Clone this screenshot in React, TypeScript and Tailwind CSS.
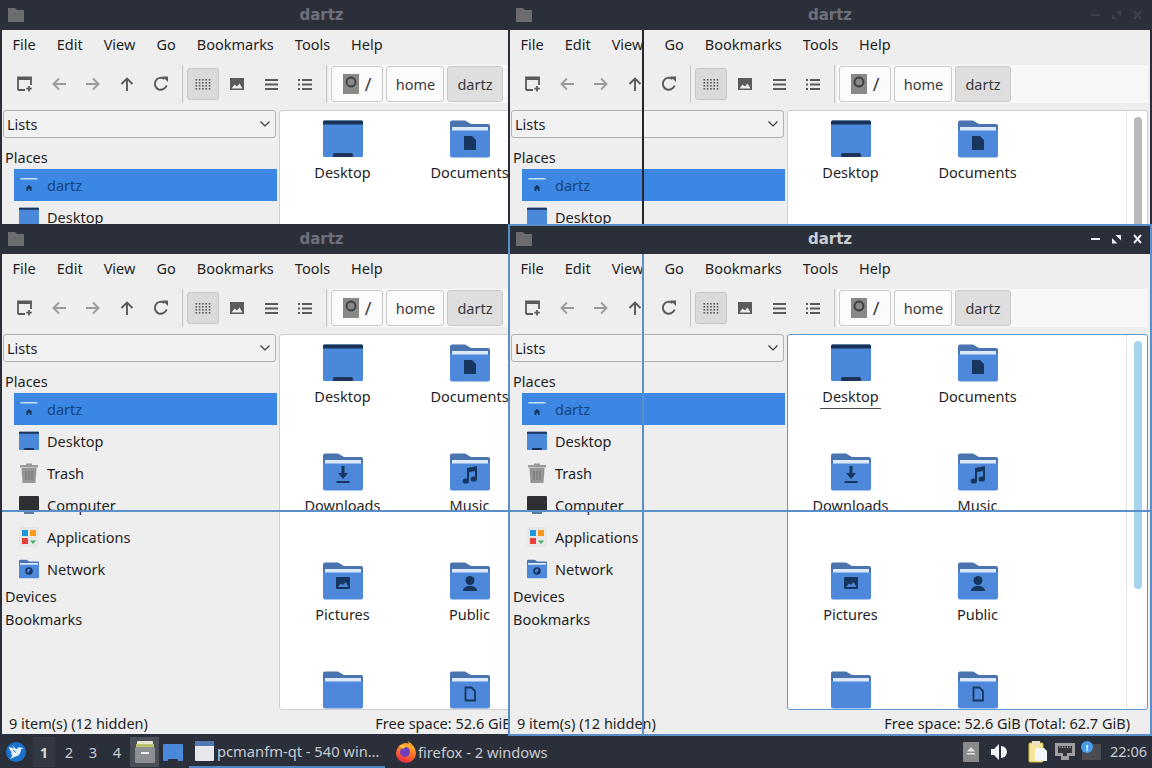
import React from "react";

const DARK = "#17365f";

function Glyph({ name }: { name: string }) {
  switch (name) {
    case "doc":
      return <path d="M14 17h8l4 4v10H14z" fill={DARK} />;
    case "download":
      return (
        <g fill={DARK}>
          <path d="M18.500 14h3v7h3.500L20 27l-5-6h3.500z" />
          <rect x="13.500" y="29" width="13" height="2" />
        </g>
      );
    case "music":
      return (
        <g fill={DARK}>
          <path d="M17 16l10-2v13h-2V19l-6 1.300V29h-2z" />
          <ellipse cx="15.800" cy="29" rx="3.200" ry="2.600" />
          <ellipse cx="23.800" cy="27" rx="3.200" ry="2.600" />
        </g>
      );
    case "pictures":
      return (
        <g>
          <rect x="13" y="16" width="14" height="12" rx="1" fill={DARK} />
          <path d="M15 26l3-3.500 2 1.500 2.500-3 3 5z" fill="#4c86d9" />
        </g>
      );
    case "public":
      return (
        <g fill={DARK}>
          <circle cx="20" cy="19.500" r="4.500" />
          <path d="M13 30c0-3.500 3-5 7-5s7 1.500 7 5z" />
        </g>
      );
    case "templates":
      return (
        <path d="M15.500 17.500h6l3.500 3.500v9.500h-9.500z" fill="none" stroke={DARK} strokeWidth="1.800" />
      );
    case "globe":
      return (
        <g>
          <circle cx="20" cy="24" r="7.500" fill={DARK} />
          <path d="M18 19.500l5 1-1 4-3 1 1 3-3-1-1-4z" fill="#4c86d9" />
        </g>
      );
    case "home":
      return <path d="M20 20l7 6h-2v6h-3.500v-4h-3v4H15v-6h-2z" fill={DARK} />;
    default:
      return null;
  }
}

function Folder({ glyph, size = 40 }: { glyph?: string; size?: number }) {
  return (
    <svg width={size} height={size} viewBox="0 0 40 40">
      <path d="M0 3.500a2 2 0 0 1 2-2h13l6 3.500h17a2 2 0 0 1 2 2V14H0z" fill="#4a74b0" />
      <path d="M0 11h40v25.500a2 2 0 0 1-2 2H2a2 2 0 0 1-2-2z" fill="#4d88da" />
      <rect x="2" y="8" width="36" height="3.500" fill="#dbe9fa" />
      {glyph && <Glyph name={glyph} />}
    </svg>
  );
}

function HomeIcon() {
  return (
    <svg width="20" height="20" viewBox="0 0 40 40">
      <rect x="3" y="6" width="34" height="3" fill="#cfe2f8" />
      <Glyph name="home" />
    </svg>
  );
}

function DesktopIcon({ size = 40 }: { size?: number }) {
  return (
    <svg width={size} height={size} viewBox="0 0 40 40">
      <rect x="0" y="1.500" width="40" height="36.500" rx="1.500" fill="#4a88da" />
      <path d="M0 3a1.500 1.500 0 0 1 1.500-1.500h37A1.500 1.500 0 0 1 40 3v2.500H0z" fill="#1b3358" />
      <path d="M10 38v-2a2 2 0 0 1 2-2h16a2 2 0 0 1 2 2v2z" fill="#1b3358" />
    </svg>
  );
}

function TrashIcon() {
  return (
    <svg width="20" height="20" viewBox="0 0 20 20">
      <rect x="1" y="2" width="18" height="2.500" fill="#999999" />
      <rect x="7" y="0.500" width="6" height="2" fill="#999999" />
      <path d="M2.500 5h15l-1 15h-13z" fill="#969696" />
      <path d="M7 8v9M10 8v9M13 8v9" stroke="#7c7c7c" strokeWidth="1.500" />
    </svg>
  );
}

function ComputerIcon() {
  return (
    <svg width="20" height="20" viewBox="0 0 20 20">
      <rect x="0" y="1" width="20" height="15" rx="1" fill="#2f3033" />
      <rect x="5" y="16" width="10" height="3" fill="#5d7ea3" />
    </svg>
  );
}

function AppsIcon() {
  return (
    <svg width="20" height="20" viewBox="0 0 20 20">
      <rect x="0" y="0" width="20" height="20" rx="2" fill="#e6e6e6" />
      <rect x="3" y="3" width="6" height="6" fill="#2196d8" />
      <rect x="11" y="3" width="6" height="6" fill="#f79a1e" />
      <rect x="3" y="11" width="6" height="6" fill="#ea3f38" />
      <path d="M14 10.500v3h3L14 17l-3-3.500h3z" fill="#3fae6a" />
    </svg>
  );
}

function ToolIcon({ name }: { name: string }) {
  const back = "#9b9b9b";
  const dark = "#5a5a5a";
  switch (name) {
    case "new":
      return (
        <svg width="16" height="16" viewBox="0 0 16 16">
          <path d="M1 14V1.500h13V9M1 14h7" fill="none" stroke={dark} strokeWidth="1.800" />
          <rect x="1" y="1" width="13.500" height="3" fill={dark} />
          <path d="M12 10v5.500M9.300 12.700h5.500" stroke={dark} strokeWidth="1.700" />
        </svg>
      );
    case "back":
      return (
        <svg width="14" height="14" viewBox="0 0 14 14">
          <path d="M7 1.500L1.500 7 7 12.500M2 7h12" fill="none" stroke={back} strokeWidth="1.900" />
        </svg>
      );
    case "forward":
      return (
        <svg width="14" height="14" viewBox="0 0 14 14">
          <path d="M7 1.500L12.500 7 7 12.500M12 7H0" fill="none" stroke={back} strokeWidth="1.900" />
        </svg>
      );
    case "up":
      return (
        <svg width="14" height="14" viewBox="0 0 14 14">
          <path d="M1.500 7L7 1.500 12.500 7M7 2v12" fill="none" stroke={dark} strokeWidth="1.900" />
        </svg>
      );
    case "reload":
      return (
        <svg width="16" height="16" viewBox="0 0 16 16">
          <path d="M13.600 9.500A6 6 0 1 1 11.500 3" fill="none" stroke={dark} strokeWidth="1.900" />
          <path d="M9.500 0.500h5.500V6z" fill={dark} />
        </svg>
      );
    case "grid":
      return (
        <svg width="16" height="12" viewBox="0 0 16 12" fill={dark}>
          {[0, 1, 2, 3].map((r) =>
            [0, 1, 2, 3, 4].map((c) => (
              <rect key={`${r}-${c}`} x={c * 3.300 + 0.500} y={r * 3 + 1} width="1.600" height="1.600" />
            ))
          )}
        </svg>
      );
    case "image":
      return (
        <svg width="14" height="12" viewBox="0 0 14 12">
          <rect width="14" height="12" fill={dark} />
          <path d="M1.500 10.500l3-4 2.500 2 2.500-3 3 5z" fill="#eeeeee" />
        </svg>
      );
    case "lines":
      return (
        <svg width="13" height="11" viewBox="0 0 13 11" fill={dark}>
          <rect y="0" width="13" height="2" />
          <rect y="4.500" width="13" height="2" />
          <rect y="9" width="13" height="2" />
        </svg>
      );
    default:
      return (
        <svg width="14" height="11" viewBox="0 0 14 11" fill={dark}>
          <rect y="0" width="2" height="2" />
          <rect y="4.500" width="2" height="2" />
          <rect y="9" width="2" height="2" />
          <rect x="4" y="0" width="10" height="2" />
          <rect x="4" y="4.500" width="10" height="2" />
          <rect x="4" y="9" width="10" height="2" />
        </svg>
      );
  }
}

function WindowControls({ active }: { active: boolean }) {
  const c = active ? "#eceff3" : "#3d414b";
  return (
    <div className="absolute right-[8px] top-[7px] flex items-center gap-[12px]">
      <svg width="9" height="12" viewBox="0 0 9 12">
        <rect y="5" width="9" height="2" fill={c} />
      </svg>
      <svg width="9" height="12" viewBox="0 0 9 12" fill={c}>
        <path d="M3.500 2H9v5.500zM0 5l5.500 5.500H0z" />
      </svg>
      <svg width="9" height="12" viewBox="0 0 9 12">
        <path d="M1 2l7 8M8 2l-7 8" stroke={c} strokeWidth="2" />
      </svg>
    </div>
  );
}

const MENUS = ["File", "Edit", "View", "Go", "Bookmarks", "Tools", "Help"];
const FILES: { label: string; glyph?: string; desktop?: boolean }[] = [
  { label: "Desktop", desktop: true },
  { label: "Documents", glyph: "doc" },
  { label: "Downloads", glyph: "download" },
  { label: "Music", glyph: "music" },
  { label: "Pictures", glyph: "pictures" },
  { label: "Public", glyph: "public" },
  { label: "" },
  { label: "", glyph: "templates" },
];

function Place({ icon, label, selected }: { icon: React.ReactNode; label: string; selected?: boolean }) {
  return (
    <div
      className={`ml-[12px] flex h-[32px] items-center gap-[8px] pl-[5px] ${
        selected ? "bg-[#3b87e3] text-[#17457f]" : ""
      }`}
    >
      <span className="flex h-[20px] w-[20px] items-center justify-center">{icon}</span>
      <span className="mt-[2px]">{label}</span>
    </div>
  );
}

function Crumb({ children, on, w }: { children: React.ReactNode; on?: boolean; w: string }) {
  return (
    <div
      className={`flex h-[36px] items-center justify-center rounded-[3px] border border-[#c9c9c9] text-[#3a3a3a] ${w} ${
        on ? "bg-[#dedede]" : "bg-[#fbfbfb]"
      }`}
    >
      {children}
    </div>
  );
}

function Win({ active = false, wide = false }: { active?: boolean; wide?: boolean }) {
  return (
    <div
      className={`relative flex h-[512px] shrink-0 flex-col border-2 bg-[#eeeeee] text-[14.5px] text-[#1f1f1f] ${
        wide ? "w-[644px]" : "w-[643px]"
      } ${active ? "border-[#5b8fc9]" : "border-[#2b2f39]"}`}
    >
      <div className="relative flex h-[28px] shrink-0 items-center justify-center bg-[#2b2f39] pb-[1px]">
        <svg className="absolute left-[6px] top-[6px]" width="16" height="14" viewBox="0 0 16 14">
          <path d="M0 0h7l2 2h7v12H0z" fill="#6c6c6c" />
        </svg>
        <span
          className={`font-['DejaVu_Sans',sans-serif] text-[15px] font-bold ${
            active ? "text-[#c9ccd2]" : "text-[#6d7078]"
          }`}
        >
          dartz
        </span>
        <WindowControls active={active} />
      </div>

      <div className="flex h-[28px] shrink-0 items-center gap-[21px] pl-[10.500px] pt-[2px]">
        {MENUS.map((m) => (
          <span key={m}>{m}</span>
        ))}
      </div>

      <div className="mt-[5px] flex h-[42px] shrink-0 items-center">
        <div className="flex items-center pl-[6px]">
          {["new", "back", "forward", "up", "reload"].map((n) => (
            <div key={n} className="flex h-[32px] w-[34px] items-center justify-center">
              <ToolIcon name={n} />
            </div>
          ))}
        </div>
        <div className="ml-[4px] h-[38px] w-px bg-[#c4c4c4]" />
        <div className="ml-[3px] flex items-center">
          {["grid", "image", "lines", "details"].map((n, i) => (
            <div key={n} className="flex w-[34px] justify-center">
              <div
                className={`flex h-[32px] w-[32px] items-center justify-center rounded-[3px] ${
                  i === 0 ? "border border-[#c8c8c8] bg-[#d9dadb]" : ""
                }`}
              >
                <ToolIcon name={n} />
              </div>
            </div>
          ))}
        </div>
        <div className="ml-[4px] h-[38px] w-px bg-[#c4c4c4]" />
        <div className="mr-[2px] ml-[2px] flex h-[38px] flex-1 items-center gap-[3px] bg-[#f8f8f8] pl-[2px]">
          <Crumb w="w-[52px]">
            <span className="flex items-center gap-[6px]">
              <svg width="16" height="20" viewBox="0 0 16 20">
                <rect width="16" height="20" fill="#888888" />
                <circle cx="8" cy="8" r="4.500" fill="none" stroke="#3c3c3c" strokeWidth="1.800" />
              </svg>
              <span className="text-[18px]">/</span>
            </span>
          </Crumb>
          <Crumb w="w-[58px] pt-[2px] pl-[1px]">home</Crumb>
          <Crumb w="w-[56px] pt-[2px]" on>
            dartz
          </Crumb>
        </div>
      </div>

      <div className="mt-[5px] flex min-h-0 flex-1">
        <div className="flex w-[275px] shrink-0 flex-col">
          <div className="ml-[1px] flex h-[28px] w-[273px] shrink-0 items-center justify-between rounded-[3px] border border-[#b4b4b4] bg-[#f1f1f1] pl-[3px] pr-[4px]">
            <span className="mt-[2px]">Lists</span>
            <svg width="12" height="8" viewBox="0 0 12 8">
              <path d="M1.500 1.500L6 6l4.500-4.500" fill="none" stroke="#3a3a3a" strokeWidth="1.200" />
            </svg>
          </div>
          <div className="mt-[8px] flex h-[23px] items-center pl-[3px]">Places</div>
          <Place selected icon={<HomeIcon />} label="dartz" />
          <Place icon={<DesktopIcon size={20} />} label="Desktop" />
          <Place icon={<TrashIcon />} label="Trash" />
          <Place icon={<ComputerIcon />} label="Computer" />
          <Place icon={<AppsIcon />} label="Applications" />
          <Place icon={<Folder size={20} glyph="globe" />} label="Network" />
          <div className="flex h-[23px] items-center pl-[3px]">Devices</div>
          <div className="flex h-[23px] items-center pl-[3px]">Bookmarks</div>
        </div>

        <div
          className={`ml-[2px] mr-[2px] flex min-w-0 flex-1 justify-between overflow-hidden rounded-[3px] border bg-white ${
            active ? "border-[#5b9ad5]" : "border-[#cfcfcf]"
          }`}
        >
          <div className="-ml-[1px] grid h-fit w-[254px] shrink-0 grid-cols-[127px_127px] content-start pt-[8px]">
            {FILES.map((f, i) => (
              <div key={i} className="flex h-[109px] flex-col items-center">
                {f.desktop ? <DesktopIcon /> : <Folder glyph={f.glyph} />}
                <span
                  className={`mt-[3px] px-[2px] pb-[2px] leading-[20px] ${
                    active && i === 0 ? "border-b border-[#4a4a4a]" : ""
                  }`}
                >
                  {f.label}
                </span>
              </div>
            ))}
          </div>
          <div className="flex w-[21px] shrink-0 justify-end border-l border-[#e6e6e6] pr-[5px] pt-[6px]">
            <div
              className={`h-[248px] w-[8px] rounded-[4px] ${active ? "bg-[#a7d4ee]" : "bg-[#b9b9b9]"}`}
            />
          </div>
        </div>
      </div>

      <div className="flex h-[24px] shrink-0 items-center justify-between pl-[7px] pr-[20px] pt-[4px]">
        <span>9 item(s) (12 hidden)</span>
        <span>Free space: 52.6 GiB (Total: 62.7 GiB)</span>
      </div>
    </div>
  );
}

function Logo() {
  return (
    <svg width="22" height="20" viewBox="0 0 22 20">
      <circle cx="11" cy="10" r="10" fill="#1b72cc" />
      <path
        d="M4 5l5 1.500L7 3l4.500 4.500c.8-1.800 2.400-2.600 4-2l3 1-2.500.8c0 3.700-2 6.700-5.500 7.200L5 17l2.500-3.500C6 12.500 6 11 6.500 10 5 8.500 4.300 7 4 5z"
        fill="#e6f2fc"
      />
      <path d="M8 8l3 2.500" stroke="#1b72cc" strokeWidth="1" />
    </svg>
  );
}

function Firefox() {
  return (
    <svg width="22" height="22" viewBox="0 0 22 22">
      <defs>
        <linearGradient id="ff" x1="0.700" y1="0" x2="0.300" y2="1">
          <stop offset="0" stopColor="#ffb52e" />
          <stop offset="0.550" stopColor="#ff6a2c" />
          <stop offset="1" stopColor="#e6224f" />
        </linearGradient>
      </defs>
      <circle cx="11" cy="12" r="10" fill="url(#ff)" />
      <path d="M13 0c4 3 7 6 7 10l-5-3z" fill="#ffa52b" />
      <circle cx="10" cy="11" r="5" fill="#6e3fbf" />
      <path d="M4 5c2-1 5-1 7 0l-3 3z" fill="#ffcf4a" />
    </svg>
  );
}

function Tray() {
  return (
    <div className="flex items-center">
      <div className="flex h-[20px] w-[16px] items-start justify-center bg-[#8a8a8a] pt-[5px]">
        <svg width="8" height="8" viewBox="0 0 8 8" fill="#e4e4e4">
          <path d="M4 0l4 4.500H0z" />
          <rect y="6" width="8" height="1.500" />
        </svg>
      </div>
      <svg className="ml-[12px]" width="17" height="16" viewBox="0 0 17 16">
        <path d="M0 5h3l5-5v16l-5-5H0z" fill="#f2f2f2" />
        <path d="M10 2a6 6 0 0 1 0 12z" fill="#f2f2f2" />
      </svg>
      <svg className="ml-[20px]" width="20" height="22" viewBox="0 0 20 22">
        <rect x="1" y="2" width="14" height="19" rx="1" fill="#f5e59a" stroke="#d9b93c" />
        <rect x="4" y="0" width="8" height="4" fill="#e9e3c9" />
        <path d="M7 7h9l3 3v10H7z" fill="#f7f7f7" />
      </svg>
      <svg className="ml-[7px]" width="20" height="18" viewBox="0 0 20 18">
        <path d="M0 0h20v13h-6v4H6v-4H0z" fill="#9f9f9f" />
        <path d="M3 3h14v7h-5v3H8v-3H3z" fill="#35373b" />
        <path d="M5 3.500v1.500M7.500 3.500v1.500M10 3.500v1.500M12.500 3.500v1.500M15 3.500v1.500" stroke="#bdbdbd" strokeWidth="1" />
      </svg>
      <span className="relative ml-[7px] block h-[16px] w-[19px] bg-[#4a4c50]">
        <span className="absolute -left-[1px] -top-[3px] flex h-[12px] w-[12px] items-center justify-center rounded-full bg-[#4b9be8] text-[9px] font-bold leading-none text-white">
          !
        </span>
      </span>
      <span className="ml-[9px] w-[42px] text-[14.5px]">22:06</span>
    </div>
  );
}

export default function App() {
  return (
    <div className="relative flex h-[768px] w-[1152px] flex-col overflow-hidden bg-[#2b2f39] font-['Noto_Sans',sans-serif]">
      <div className="grid h-[736px] shrink-0 grid-cols-[508px_644px] grid-rows-[224px_512px]">
        <div className="overflow-hidden">
          <Win />
        </div>
        <div className="overflow-hidden">
          <Win wide />
        </div>
        <div className="overflow-hidden">
          <Win />
        </div>
        <div className="overflow-hidden">
          <Win active wide />
        </div>
      </div>

      <div className="flex h-[32px] shrink-0 items-center bg-[#2b2f39] text-[14.7px] text-[#c6cad0]">
        <div className="ml-[5px]">
          <Logo />
        </div>
        <div className="ml-[6px] flex items-center">
          <span className="flex h-[30px] w-[22px] items-center justify-center bg-[#343843] font-bold text-[#d5d8dc]">1</span>
          <span className="ml-[2px] flex w-[24px] justify-center">2</span>
          <span className="flex w-[24px] justify-center">3</span>
          <span className="flex w-[24px] justify-center">4</span>
        </div>
        <div className="ml-[1px] flex h-[30px] w-[29px] items-center justify-center bg-[#4b4f57]">
          <svg width="20" height="22" viewBox="0 0 20 22">
            <rect x="2" y="0" width="16" height="5" rx="1" fill="#e9e6d0" />
            <rect x="1" y="3" width="18" height="3" fill="#b9c36a" />
            <rect x="0" y="6" width="20" height="16" rx="1.500" fill="#8d8f92" />
            <rect x="6" y="11" width="8" height="2" fill="#eeeeee" />
          </svg>
        </div>
        <div className="ml-[4px]">
          <svg width="20" height="17" viewBox="0 0 20 17">
            <rect width="20" height="17" rx="1" fill="#4a88da" />
            <path d="M5 17v-1a1 1 0 0 1 1-1h8a1 1 0 0 1 1 1v1z" fill="#2b2f39" />
          </svg>
        </div>
        <div className="ml-[6px] flex h-[32px] w-[196px] items-center gap-[3px] border-b-2 border-[#4c86c4] pl-[6px]">
          <svg width="19" height="20" viewBox="0 0 19 20">
            <rect width="19" height="20" rx="1" fill="#e5e7ea" />
            <rect width="19" height="5" fill="#4f78b3" />
          </svg>
          <span className="whitespace-nowrap">pcmanfm-qt - 540 win…</span>
        </div>
        <div className="ml-[10px] flex items-center gap-[1px]">
          <Firefox />
          <span className="whitespace-nowrap">firefox - 2 windows</span>
        </div>
        <div className="ml-auto">
          <Tray />
        </div>
      </div>

      <div className="absolute left-[2px] right-0 top-[510px] h-[2px] bg-[#5b8fc9]" />
      <div className="absolute left-[642px] top-[30px] h-[194px] w-[2px] bg-[#26282e]" />
      <div className="absolute left-[642px] top-[254px] h-[482px] w-[2px] bg-[#5b8fc9]" />
    </div>
  );
}
